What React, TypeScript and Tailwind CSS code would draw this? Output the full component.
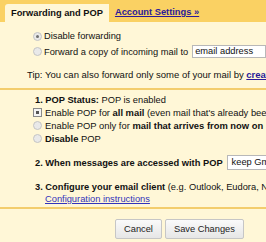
import React from "react";

// ─── Small form glyphs ────────────────────────────────────────────────────────

function Radio({ checked = false }: { checked?: boolean }) {
  return (
    <span className="inline-flex shrink-0 w-[9px] h-[9px] rounded-full border border-[#c4c4c4] bg-[#e9e9e9] items-center justify-center">
      {checked && <span className="w-[3px] h-[3px] rounded-full bg-[#707070]" />}
    </span>
  );
}

function Check({ checked = false }: { checked?: boolean }) {
  return (
    <span className="inline-flex shrink-0 w-[9px] h-[9px] border border-[#8a8a8a] bg-[#f4f4f4] items-center justify-center">
      {checked && <span className="w-[3px] h-[3px] bg-[#555555]" />}
    </span>
  );
}

const btn =
  "h-[20px] px-[8px] border border-[#c6c6c6] rounded-[2px] bg-gradient-to-b from-[#fafafa] to-[#e6e6e6] text-[9.3px] leading-[18px] text-[#222]";

export default function App() {
  return (
    <div className="w-[266px] h-[242px] overflow-hidden bg-[#fff7d7] text-[9.3px] text-[#111] font-['Liberation_Sans',Arial,sans-serif] leading-[12px] whitespace-nowrap">
      {/* Tabs */}
      <div className="h-[22px] bg-[#fad163] flex items-end pl-[5px]">
        <div className="h-[18px] bg-[#fff7d7] px-[6px] font-bold leading-[18px] rounded-tl-[3px]">
          Forwarding and POP
        </div>
        <a className="ml-[6px] mb-[4px] font-bold underline text-[#2a1a99] leading-[12px]">Account Settings »</a>
      </div>

      {/* Forwarding */}
      <div className="pl-[33px] pt-[8px] flex flex-col gap-[3px]">
        <div className="h-[12px] flex items-center gap-[2px]">
          <Radio checked />
          <span>Disable forwarding</span>
        </div>
        <div className="h-[13px] flex items-center gap-[2px]">
          <Radio />
          <span>Forward a copy of incoming mail to</span>
          <span className="ml-[2px] h-[13px] w-[90px] border border-[#b8b8b8] bg-white px-[2px] leading-[11px]">email address</span>
        </div>
      </div>

      <div className="pl-[27px] pt-[11px] h-[30px] text-[9.5px]">
        Tip: You can also forward only some of your mail by{" "}
        <a className="underline font-bold text-[#2a1a99]">creating a filter!</a>
      </div>

      <div className="h-[2px] bg-[#f3cd6c]" />

      {/* POP */}
      <div className="pl-[35px] pt-[4px]">
        <div className="h-[12px] flex items-center">
          <b>1. POP Status:</b>&nbsp;POP is enabled
        </div>
        <div className="-ml-[2px] text-[9.4px]">
          <div className="h-[13px] flex items-center gap-[3px]">
            <Check checked />
            <span>
              Enable POP for <b>all mail</b> (even mail that's already been downloaded)
            </span>
          </div>
          <div className="h-[13px] flex items-center gap-[3px]">
            <Radio />
            <span>
              Enable POP only for <b>mail that arrives from now on</b>
            </span>
          </div>
          <div className="h-[13px] flex items-center gap-[3px]">
            <Radio />
            <span>
              <b>Disable</b> POP
            </span>
          </div>
        </div>

        <div className="mt-[10px] h-[15px] flex items-center">
          <b>2. When messages are accessed with POP</b>
          <span className="ml-[4px] h-[15px] w-[80px] border border-[#b8b8b8] bg-white px-[4px] leading-[13px]">
            keep Gmail's copy in the Inbox
          </span>
        </div>

        <div className="mt-[11px] h-[12px] flex items-center">
          <b>3. Configure your email client</b>&nbsp;(e.g. Outlook, Eudora, Netscape Mail)
        </div>
        <div className="pl-[10px] h-[12px]">
          <a className="underline text-[#3333bb]">Configuration instructions</a>
        </div>
      </div>

      <div className="mt-[2px] h-[2px] bg-[#f3cd6c]" />

      {/* Buttons */}
      <div className="pt-[10px] pl-[115px] flex gap-[3px]">
        <button className={btn}>Cancel</button>
        <button className={btn}>Save Changes</button>
      </div>
    </div>
  );
}
